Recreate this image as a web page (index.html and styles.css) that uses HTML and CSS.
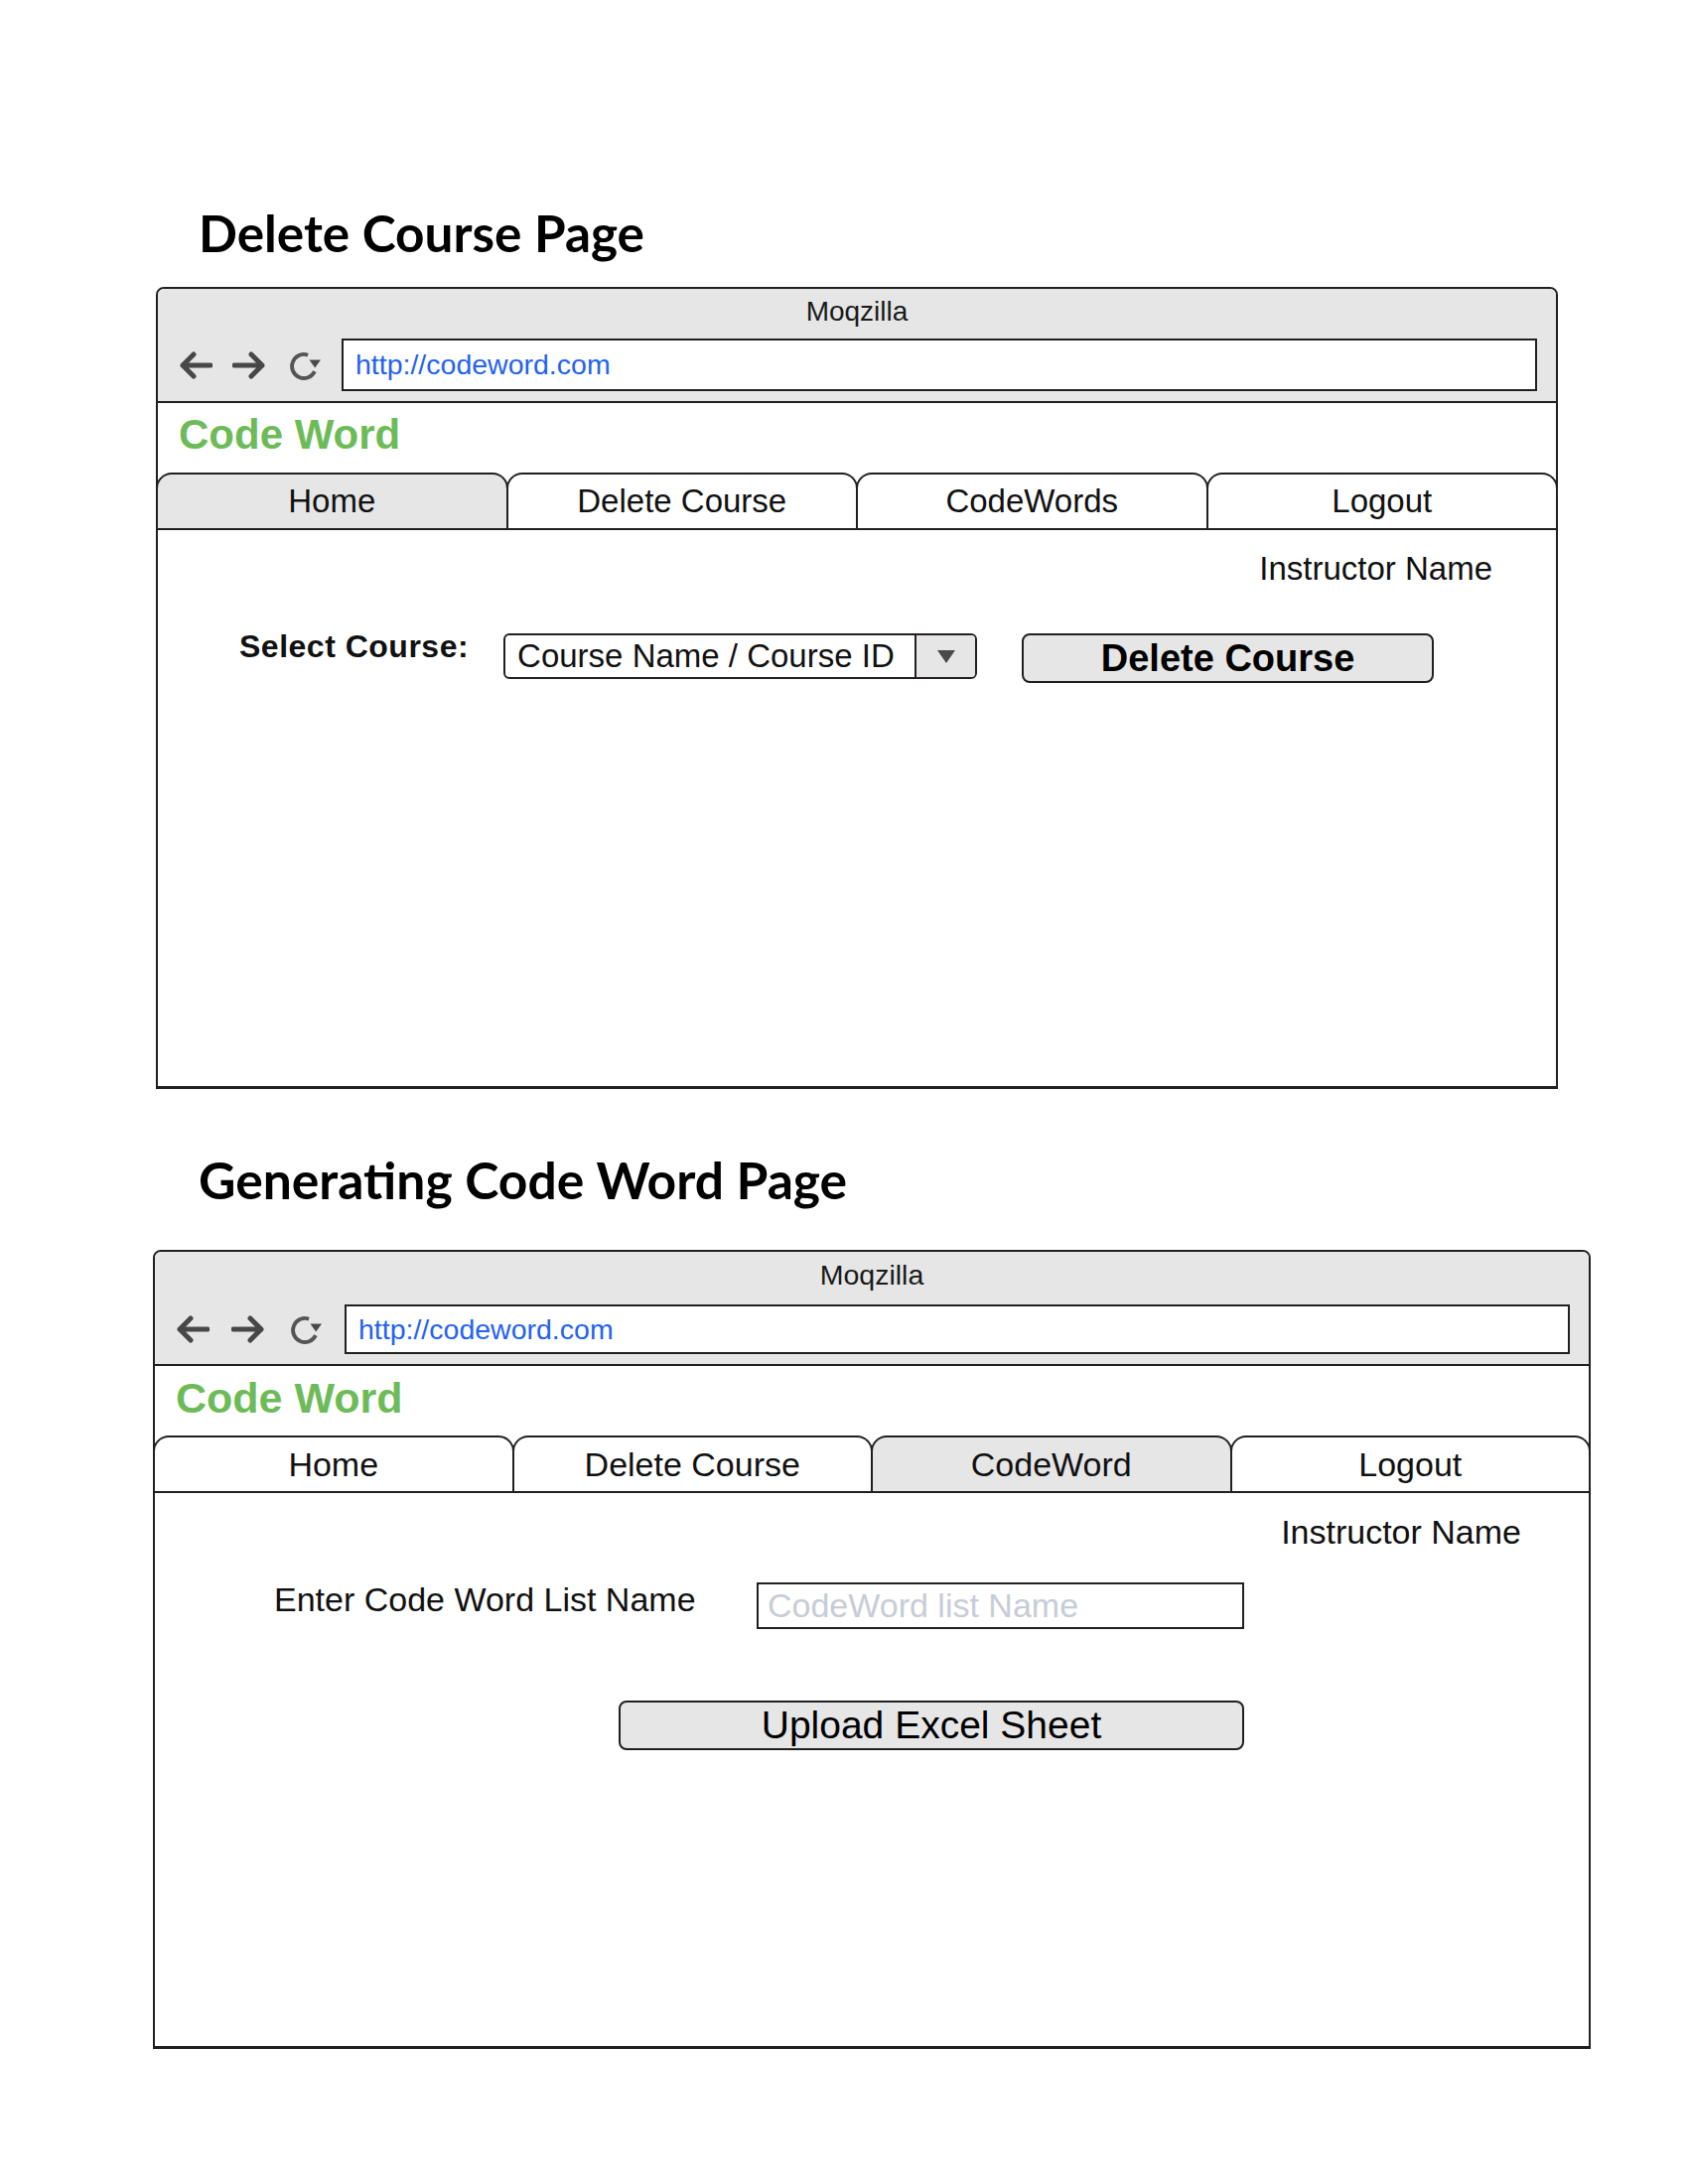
FILE: index.html
```html
<!DOCTYPE html>
<html lang="en">
<head>
<meta charset="utf-8">
<title>Code Word mockups</title>
<link rel="stylesheet" href="styles.css">
</head>
<body>
<main class="doc">
  <section class="sheet sheet-delete">
    <h1 class="sheet-title">Delete Course Page</h1>
    <div class="browser browser-delete">
      <div class="titlebar">
        <div class="app-name">Moqzilla</div>
        <div class="navrow">
          <svg class="nav-icon arrow" viewBox="0 0 36 32" aria-hidden="true"><path d="M34 16H6M17 5L6 16l11 11"/></svg>
          <svg class="nav-icon arrow" viewBox="0 0 36 32" aria-hidden="true"><path d="M2 16h28M19 5l11 11-11 11"/></svg>
          <svg class="nav-icon reload" viewBox="0 0 34 34" aria-hidden="true"><path class="arc" d="M20.1 6.7A12 12 0 1 0 26.9 23.1"/><path class="head" d="M21.5 11.5h11.5l-5.8 8z"/></svg>
          <div class="url">http://codeword.com</div>
        </div>
      </div>
      <div class="brand">Code Word</div>
      <nav class="tabs">
        <div class="tab is-active">Home</div>
        <div class="tab">Delete Course</div>
        <div class="tab">CodeWords</div>
        <div class="tab">Logout</div>
      </nav>
      <div class="page-body">
        <div class="user">Instructor Name</div>
        <div class="delete-form">
          <span class="field-label field-label-bold">Select Course:</span>
          <div class="select">
            <span class="select-value">Course Name / Course ID</span>
            <span class="select-arrow"><svg viewBox="0 0 20 15" aria-hidden="true"><path d="M1 1h18l-9 13z"/></svg></span>
          </div>
          <div class="btn btn-delete">Delete Course</div>
        </div>
      </div>
    </div>
  </section>

  <section class="sheet sheet-codeword">
    <h1 class="sheet-title">Generating Code Word Page</h1>
    <div class="browser browser-codeword">
      <div class="titlebar">
        <div class="app-name">Moqzilla</div>
        <div class="navrow">
          <svg class="nav-icon arrow" viewBox="0 0 36 32" aria-hidden="true"><path d="M34 16H6M17 5L6 16l11 11"/></svg>
          <svg class="nav-icon arrow" viewBox="0 0 36 32" aria-hidden="true"><path d="M2 16h28M19 5l11 11-11 11"/></svg>
          <svg class="nav-icon reload" viewBox="0 0 34 34" aria-hidden="true"><path class="arc" d="M20.1 6.7A12 12 0 1 0 26.9 23.1"/><path class="head" d="M21.5 11.5h11.5l-5.8 8z"/></svg>
          <div class="url">http://codeword.com</div>
        </div>
      </div>
      <div class="brand">Code Word</div>
      <nav class="tabs">
        <div class="tab">Home</div>
        <div class="tab">Delete Course</div>
        <div class="tab is-active">CodeWord</div>
        <div class="tab">Logout</div>
      </nav>
      <div class="page-body">
        <div class="user">Instructor Name</div>
        <div class="codeword-form">
          <span class="field-label">Enter Code Word List Name</span>
          <div class="text-input">CodeWord list Name</div>
          <div class="btn btn-upload">Upload Excel Sheet</div>
        </div>
      </div>
    </div>
  </section>
</main>
</body>
</html>
```

FILE: styles.css
```css
* {
  box-sizing: border-box;
}

body {
  margin: 0;
  background: #ffffff;
  color: #000000;
  font-family: "Liberation Sans", Arial, sans-serif;
}

.doc {
  width: 1700px;
  height: 2200px;
  padding-top: 201px;
}

.sheet-title {
  margin: 0 0 22px 200px;
  font-family: Lato, "Open Sans", sans-serif;
  font-weight: 700;
  font-size: 51.3px;
  line-height: 66px;
  color: #000000;
}

.sheet-codeword .sheet-title {
  margin-top: 58px;
  margin-bottom: 38px;
  font-size: 51.6px;
}

/* browser frame */
.browser {
  display: flex;
  flex-direction: column;
  border: 2px solid #231f20;
  border-bottom-width: 3px;
  border-radius: 8px 8px 0 0;
  background: #ffffff;
  font-size: 33px;
}

.browser-delete {
  margin-left: 157px;
  width: 1412px;
  height: 808px;
}

.browser-codeword {
  margin-left: 154px;
  width: 1448px;
  height: 805px;
  font-size: 34px;
}

.titlebar {
  height: 115px;
  padding-top: 7px;
  background: #e6e6e6;
  border-bottom: 2px solid #231f20;
  border-radius: 6px 6px 0 0;
}

.app-name {
  font-size: 28px;
  line-height: 32px;
  text-align: center;
  color: #1a1a1a;
}

.browser-codeword .app-name {
  font-size: 28.5px;
}

.navrow {
  display: flex;
  align-items: center;
  gap: 20px;
  margin-top: 11px;
  padding: 0 19px;
}

.browser-codeword .navrow {
  gap: 22px;
  margin-top: 14px;
}

.nav-icon {
  flex: none;
  display: block;
}

.nav-icon.arrow {
  width: 36px;
  height: 32px;
  fill: none;
  stroke: #474747;
  stroke-width: 5;
  stroke-linecap: round;
  stroke-linejoin: round;
}

.nav-icon.reload {
  width: 34px;
  height: 34px;
}

.reload .arc {
  fill: none;
  stroke: #555555;
  stroke-width: 3.8;
}

.reload .head {
  fill: #4a4a4a;
}

.url {
  flex: 1;
  height: 53px;
  padding-left: 12px;
  border: 2px solid #231f20;
  background: #ffffff;
  color: #2462f2;
  font-size: 28.5px;
  line-height: 49px;
}

.browser-codeword .url {
  height: 50px;
  line-height: 46px;
}

/* site header */
.brand {
  padding: 8px 0 0 21px;
  height: 70px;
  color: #6dbb58;
  font-weight: 700;
  font-size: 42px;
  line-height: 48px;
}

.browser-codeword .brand {
  font-size: 43px;
}

.tabs {
  display: flex;
  height: 58px;
  margin: 0 -2px;
  border-bottom: 2px solid #231f20;
}

.tab {
  flex: 1;
  display: flex;
  align-items: center;
  justify-content: center;
  margin-left: -2px;
  border: 2px solid #231f20;
  border-bottom: none;
  border-radius: 16px 16px 0 0;
  background: #ffffff;
  color: #111111;
}

.tab:first-child {
  margin-left: 0;
}

.tab.is-active {
  background: #e6e6e6;
}

/* page body */
.page-body {
  display: flex;
  flex-direction: column;
  padding-top: 20px;
}

.user {
  align-self: flex-end;
  padding-right: 64px;
  line-height: 38px;
  color: #111111;
}

.browser-codeword .user {
  padding-right: 68px;
  line-height: 39px;
}

.delete-form {
  display: flex;
  align-items: flex-start;
  margin: 46px 0 0 82px;
}

.field-label {
  line-height: 38px;
  color: #111111;
}

.field-label-bold {
  margin-top: -6px;
  margin-right: 35px;
  font-weight: 700;
  font-size: 32px;
  letter-spacing: 0.5px;
}

.select {
  display: flex;
  width: 477px;
  height: 46px;
  border: 2px solid #231f20;
  border-radius: 6px;
  overflow: hidden;
  margin-right: 45px;
}

.select-value {
  flex: 1;
  padding-left: 12px;
  line-height: 42px;
  color: #111111;
}

.select-arrow {
  display: flex;
  align-items: center;
  justify-content: center;
  width: 61px;
  border-left: 2px solid #231f20;
  background: #e6e6e6;
}

.select-arrow svg {
  width: 20px;
  height: 15px;
  fill: #4a4a4a;
}

.btn {
  display: flex;
  align-items: center;
  justify-content: center;
  border: 2px solid #231f20;
  border-radius: 8px;
  background: #e6e6e6;
  color: #000000;
}

.btn-delete {
  width: 415px;
  height: 50px;
  font-weight: 700;
  font-size: 38px;
}

.codeword-form {
  display: grid;
  grid-template-columns: 425px 491px;
  column-gap: 61px;
  row-gap: 72px;
  align-items: start;
  margin: 29px 0 0 120px;
  width: max-content;
}

.codeword-form .field-label {
  line-height: 39px;
}

.text-input {
  height: 47px;
  margin-top: 2px;
  padding-left: 9px;
  border: 2px solid #231f20;
  color: #c7ccd6;
  line-height: 43px;
}

.btn-upload {
  grid-column: 1 / -1;
  justify-self: end;
  width: 630px;
  height: 50px;
  font-size: 39px;
}
```
